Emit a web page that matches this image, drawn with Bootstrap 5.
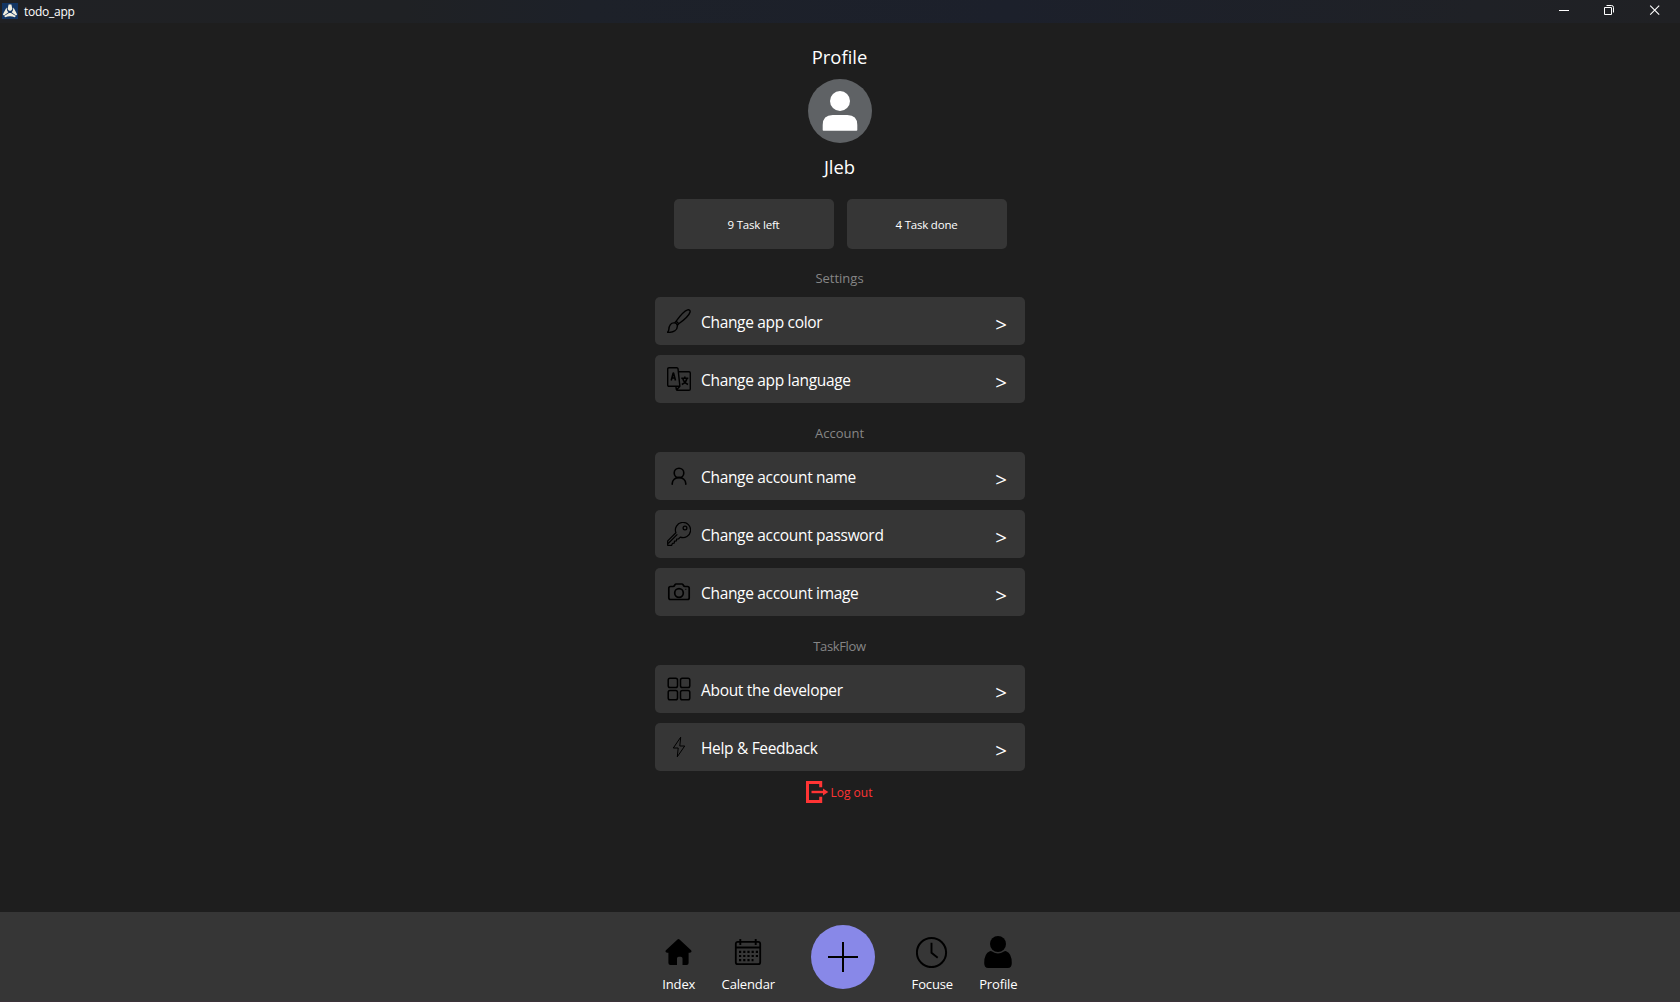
<!DOCTYPE html>
<html lang="en">
<head>
<meta charset="utf-8">
<title>todo_app</title>
<link rel="stylesheet" href="https://cdn.jsdelivr.net/npm/bootstrap@5.3.0/dist/css/bootstrap.min.css">
<style>
body{font-family:"Open Sans","Noto Sans",sans-serif;background:#1e1e1e;color:#fff;overflow:hidden}
svg{display:block;flex:none}
.titlebar{height:23px;background:linear-gradient(90deg,#202124 0,#1f2124 24%,#1d2129 35%,#1c202b 60%,#1f2126 88%,#202124 100%);padding-left:2px}
.app-logo{margin-top:3px}
.app-name{font-size:12px;line-height:24px;letter-spacing:-.25px;margin-left:6px}
.heading{font-size:18.4px;line-height:28px;padding-right:1px}
.heading-top{margin-top:20px}
.avatar{margin:8px 0 10px}
.stats{gap:13px;margin-top:18px}
.stat{width:160px;height:50px;background:#363636;border-radius:5px;font-size:11.5px;letter-spacing:-.2px;padding-top:1px}
.caption-line{font-size:13px;line-height:20px;color:#868686;margin:20px 0 9px;padding-right:1px}
.caption-first{margin-top:19px}
.tight{letter-spacing:-.35px}
.rows{width:370px;gap:10px}
.setting{height:48px;background:#363636;border-radius:5px;padding:0 18px 0 12px}
.setting span{font-size:15.5px;letter-spacing:-.32px;margin-left:10px;padding-top:4px}
.setting b{font-weight:500;font-size:20.5px;padding-top:5px;line-height:24px}
.logout{margin-top:9px;font-size:12px;color:#ff3434;padding-right:3px}
.logout span{margin-left:2px;padding-top:1px}
.bottombar{height:90px;background:#363636;border-bottom:1px solid #3c3339;padding-right:3px}
.tab{width:60px;font-size:13px;line-height:20px;letter-spacing:-.15px;padding-top:24px}
.tab svg{margin-bottom:6px}
.tab-calendar{margin-left:9.5px}
.tab-profile{margin-left:6px}
.add{margin:13px 27.5px 0 32.5px}
</style>
<script src="https://cdn.jsdelivr.net/npm/bootstrap@5.3.0/dist/js/bootstrap.bundle.min.js"></script>
</head>
<body class="vh-100 d-flex flex-column">
<header class="titlebar d-flex">
  <svg class="app-logo" width="16" height="16" viewBox="0 0 16 16"><path fill="#123563" d="M0 0h16v16H0z"/><path fill="#f1eedf" d="M6.600 1.500h2.800l1 4.500-1.400 1.700H7L5.600 6zM4.500 4.500 5.200 7.700 6.400 9.200 2 12.500.8 11.500zM11.500 4.500 10.800 7.700 9.600 9.200 14 12.500l1.200-1zM7 10h2l4.800 3-1 1.200Q8 12.500 3.200 14.200l-1-1.200z"/></svg>
  <span class="app-name">todo_app</span>
  <svg class="ms-auto" width="121" height="22" viewBox="0 0 121 22" fill="none" stroke="#fff"><path d="M0 10.500h10M45.500 7.500h7v7h-7zM47.500 5.500h5q2 0 2 2v5"/><path d="m91.200 5.700 9 9m0-9-9 9" stroke-width="1.100"/></svg>
</header>

<main class="flex-grow-1 d-flex flex-column align-items-center">
  <div class="heading heading-top">Profile</div>
  <svg class="avatar" width="64" height="64" viewBox="0 0 64 64"><circle cx="32" cy="32" r="32" fill="#5f6265"/><circle cx="32" cy="22" r="10" fill="#fff"/><path fill="#fff" d="M14.700 51v-5q0-10 10-10h14.600q10 0 10 10v5q0 .8-.8.8h-33q-.8 0-.8-.8z"/></svg>
  <div class="heading">Jleb</div>
  <div class="stats d-flex">
    <div class="stat d-flex align-items-center justify-content-center">9 Task left</div>
    <div class="stat d-flex align-items-center justify-content-center">4 Task done</div>
  </div>

  <div class="caption-line caption-first">Settings</div>
  <div class="rows d-flex flex-column">
    <div class="setting d-flex align-items-center">
      <svg width="24" height="24" viewBox="0 0 24 24" fill="none" stroke="#000" stroke-width="1.400" stroke-linejoin="round"><path d="M9.200 12.200C12 8.200 17.500 2 20.600.9c1.700-.5 2.900.7 2.400 2.400-1 3.200-7.200 8.600-11.300 11.500zM9.200 12.200 7.600 13.900M11.700 14.800 10.200 16.400M7.600 13.900c1.400.2 2.400 1.200 2.700 2.500.5 4.600-3.700 7.300-9.700 6.900.4-.8 1-1.200 1.200-2.700.2-4 2-7.100 5.800-6.700z"/></svg>
      <span>Change app color</span><b class="ms-auto">&gt;</b>
    </div>
    <div class="setting d-flex align-items-center">
      <svg width="24" height="24" viewBox="0 0 24 24" fill="none" stroke="#000" stroke-width="1.400" stroke-linejoin="round"><path d="M2 .7h7.800q1 0 1.200 1l1.900 17.600H2q-1.300 0-1.300-1.300V2Q.7.7 2 .7zM11.500 4.800H22q1.300 0 1.300 1.300V22q0 1.300-1.300 1.300H10.500q-1 0-1.200-1L8.900 19.300M9.400 23l3.500-3.700"/><path stroke-width="1.600" d="M4.200 13.500 6.200 6h.3l2 7.500M4.900 11h3.100M14.300 11.200h7M17.800 9.500v1.700M20 11.200q-1 4.300-5.200 6.300M15.700 11.400q1.200 4.300 5.300 6.100"/></svg>
      <span>Change app language</span><b class="ms-auto">&gt;</b>
    </div>
  </div>

  <div class="caption-line">Account</div>
  <div class="rows d-flex flex-column">
    <div class="setting d-flex align-items-center">
      <svg width="24" height="24" viewBox="0 0 24 24" fill="none" stroke="#000" stroke-width="1.600" stroke-linecap="round"><circle cx="12" cy="9" r="4.800"/><path d="M5.200 20.200v-.5a6.800 6.300 0 0 1 13.600 0v.5"/></svg>
      <span>Change account name</span><b class="ms-auto">&gt;</b>
    </div>
    <div class="setting d-flex align-items-center">
      <svg width="24" height="24" viewBox="0 0 24 24" fill="none" stroke="#000" stroke-width="1.250" stroke-linejoin="round"><path d="M8.900 10.700A7.600 7.600 0 1 1 13.300 15.100L11.600 16.800 9.700 17 9.400 19 7.500 19.200 7.200 21.200 5.400 21.400 4.700 23.300H.7V18.900z"/><circle cx="18" cy="6" r="1.900"/><path d="M1.200 21.500 10.300 12.400"/></svg>
      <span>Change account password</span><b class="ms-auto">&gt;</b>
    </div>
    <div class="setting d-flex align-items-center">
      <svg width="24" height="24" viewBox="0 0 24 24" fill="none" stroke="#000" stroke-width="1.700" stroke-linejoin="round"><path d="M3.500 6.500H6q1 0 1.500-1L8 4.800q.3-.8 1.200-.8h5.600q.9 0 1.200.8l.5.700q.5 1 1.500 1h2.500q1.700 0 1.700 1.800v9.400q0 1.800-1.700 1.800h-17q-1.700 0-1.700-1.800V8.300q0-1.800 1.700-1.800z"/><circle cx="12" cy="13" r="4.300"/><path d="M18.300 9.300h1" stroke-width="1"/></svg>
      <span>Change account image</span><b class="ms-auto">&gt;</b>
    </div>
  </div>

  <div class="caption-line tight">TaskFlow</div>
  <div class="rows d-flex flex-column">
    <div class="setting d-flex align-items-center">
      <svg width="24" height="24" viewBox="0 0 24 24" fill="none" stroke="#000" stroke-width="1.500"><rect x="1.200" y="1.300" width="9.300" height="9.300" rx="1.800"/><rect x="13.500" y="1.300" width="9.300" height="9.300" rx="1.800"/><rect x="1.200" y="13.500" width="9.300" height="9.300" rx="1.800"/><rect x="13.500" y="13.500" width="9.300" height="9.300" rx="1.800"/></svg>
      <span>About the developer</span><b class="ms-auto">&gt;</b>
    </div>
    <div class="setting d-flex align-items-center">
      <svg width="24" height="24" viewBox="0 0 24 24" fill="none" stroke="#000" stroke-width="1" stroke-linejoin="round"><path d="M13.700 2.200 6.300 13h4.900l-.9 8.800L17.700 11h-4.900z"/></svg>
      <span>Help &amp; Feedback</span><b class="ms-auto">&gt;</b>
    </div>
  </div>

  <div class="logout d-flex align-items-center">
    <svg width="24" height="24" viewBox="0 0 24 24" fill="none" stroke="#ff3434"><path stroke-width="3" d="M15.700 7.300V2.500H2.500v19h13.200v-4.800"/><path stroke-width="2.400" d="M6.500 12h12"/><path fill="#ff3434" stroke="none" d="M18 8.500 23.300 12 18 15.500z"/></svg>
    <span>Log out</span>
  </div>
</main>

<nav class="bottombar d-flex justify-content-center align-items-start">
  <div class="tab d-flex flex-column align-items-center">
    <svg width="32" height="32" viewBox="0 0 32 32"><path d="M14.500 3.500q1-.9 2 0L28.100 14.200q.8.900.2 1.800-.6.900-1.800.8h-.9V27q0 2-2 2H19.500v-6.500q0-1.700-1.700-1.700h-2.100q-1.700 0-1.700 1.700V29H7.400q-2 0-2-2V16.800H4.500q-1.200.1-1.800-.8-.6-.9.200-1.800z"/></svg>
    <div>Index</div>
  </div>
  <div class="tab tab-calendar d-flex flex-column align-items-center">
    <svg width="32" height="32" viewBox="0 0 32 32" fill="none" stroke="#000"><rect x="3.800" y="5.800" width="24.400" height="22.400" rx="2" stroke-width="1.800"/><path stroke-width="1.900" d="M4 11.500h24M8.300 3v6M23.700 3v6"/><path stroke-width="2.200" stroke-dasharray="2.200 2" d="M7 15.800h19M7 20h19M7 24.200h14.500"/></svg>
    <div>Calendar</div>
  </div>
  <svg class="add" width="64" height="64" viewBox="0 0 64 64"><circle cx="32" cy="32" r="32" fill="#8888e8"/><path d="M17 32h30M32 17v30" stroke="#000" stroke-width="2"/></svg>
  <div class="tab d-flex flex-column align-items-center">
    <svg width="32" height="32" viewBox="0 0 32 32" fill="none" stroke="#000"><circle cx="15.500" cy="16.500" r="14.600" stroke-width="2"/><path stroke-width="1.900" d="M15.500 6.800v10l6.200 5"/></svg>
    <div>Focuse</div>
  </div>
  <div class="tab tab-profile d-flex flex-column align-items-center">
    <svg width="32" height="32" viewBox="0 0 32 32"><circle cx="16" cy="8" r="8"/><path d="M7.800 15.300q1.300-.5 2.300.3 5.900 3.900 11.800 0 1-.8 2.300-.3 5.600 2.200 5.600 11.700 0 5-4 5H6.200q-4 0-4-5 0-9.500 5.600-11.700z"/></svg>
    <div>Profile</div>
  </div>
</nav>
</body>
</html>
